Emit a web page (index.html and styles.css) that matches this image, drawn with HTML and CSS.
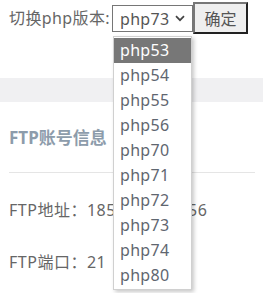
FILE: index.html
```html
<!DOCTYPE html>
<html>
<head>
<meta charset="utf-8">
<link rel="stylesheet" href="styles.css">
</head>
<body>
<div class="switch-row">
  <span class="label">切换php版本:</span>
  <div class="select">
    <span class="select-value">php73</span>
    <svg class="chevron" width="10" height="7" viewBox="0 0 10 7"><path d="M1 1.2 L5 5.2 L9 1.2" fill="none" stroke="#444" stroke-width="1.7"/></svg>
  </div>
  <button class="confirm">确定</button>
</div>
<div class="band"></div>
<section class="info">
  <h3 class="info-title">FTP账号信息</h3>
  <div class="info-row">FTP地址：185.199.110.56</div>
  <div class="info-row second">FTP端口：21</div>
</section>
<ul class="dropdown">
  <li class="opt active">php53</li>
  <li class="opt">php54</li>
  <li class="opt">php55</li>
  <li class="opt">php56</li>
  <li class="opt">php70</li>
  <li class="opt">php71</li>
  <li class="opt">php72</li>
  <li class="opt">php73</li>
  <li class="opt">php74</li>
  <li class="opt">php80</li>
</ul>
</body>
</html>
```
FILE: styles.css
```css
html, body {
  margin: 0;
  padding: 0;
  background: #fff;
}
body {
  font-family: "Noto Sans", "Noto Sans CJK SC", sans-serif;
  font-size: 16px;
  color: #666;
  position: relative;
  width: 263px;
  height: 293px;
  overflow: hidden;
}
.switch-row {
  display: flex;
  align-items: center;
  height: 32px;
  padding: 2px 0 0 9px;
}
.label {
  line-height: 24px;
  width: 103px;
  white-space: nowrap;
  letter-spacing: 0.4px;
}
.select {
  box-sizing: border-box;
  width: 81px;
  height: 27px;
  border: 1px solid #767676;
  background: #fff;
  display: flex;
  align-items: center;
  justify-content: space-between;
  padding: 0 7px 0 7px;
  margin-top: 1px;
}
.select-value {
  line-height: 24px;
  color: #555;
  letter-spacing: 0.3px;
}
.chevron {
  display: block;
}
.confirm {
  box-sizing: border-box;
  width: 55px;
  height: 32px;
  margin-left: 0;
  background: #efefef;
  border-style: solid;
  border-width: 2px;
  border-color: #777 #222 #222 #777;
  font-family: "Noto Sans", "Noto Sans CJK SC", sans-serif;
  font-size: 16px;
  color: #555;
  padding: 0;
}
.band {
  margin-top: 44px;
  height: 24px;
  background: #f0f0f2;
}
.info {
  padding: 0 8px;
}
.info-title {
  margin: 24px 0 0 1px;
  font-size: 17px;
  line-height: 24px;
  font-weight: bold;
  color: #8d9cab;
  padding-bottom: 22px;
  border-bottom: 1px solid #e5e5e5;
}
.info-row {
  margin-top: 25px;
  padding-left: 1px;
  line-height: 24px;
  letter-spacing: 0.5px;
}
.info-row.second {
  margin-top: 28px;
}
.dropdown {
  position: absolute;
  left: 113px;
  top: 36px;
  width: 77px;
  margin: 0;
  padding: 1px 0;
  list-style: none;
  background: #fff;
  border: 1px solid #d0d0d0;
  box-shadow: 2px 2px 4px rgba(0, 0, 0, 0.22);
}
.opt {
  height: 25px;
  line-height: 25px;
  padding-left: 6px;
  color: #5f6670;
  letter-spacing: 0.3px;
}
.opt.active {
  background: #777;
  color: #fff;
}
```
